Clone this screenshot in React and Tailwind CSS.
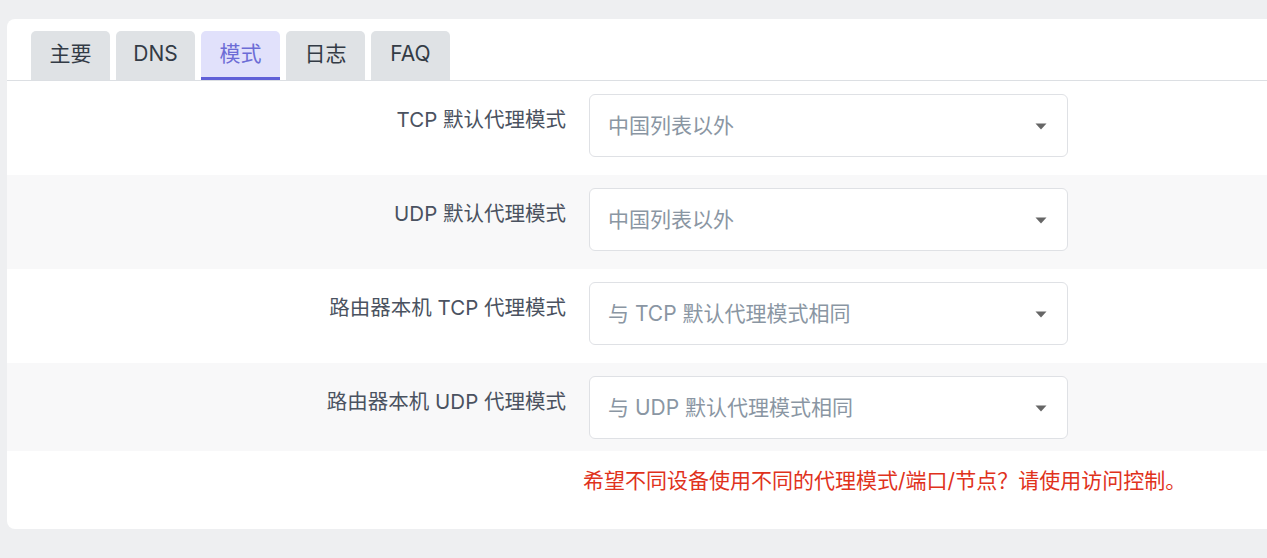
const TABS = ["主要", "DNS", "模式", "日志", "FAQ"];

const ROWS = [
  { label: "TCP 默认代理模式", value: "中国列表以外" },
  { label: "UDP 默认代理模式", value: "中国列表以外" },
  { label: "路由器本机 TCP 代理模式", value: "与 TCP 默认代理模式相同" },
  { label: "路由器本机 UDP 代理模式", value: "与 UDP 默认代理模式相同" },
];

const font = { fontFamily: "Inter, 'Noto Sans CJK SC', sans-serif" };

function Select({ value }) {
  return (
    <div className="w-[479px] h-[63px] bg-white border border-[#dfe1e5] rounded-[6px] flex items-center justify-between pl-[18px] pr-[20px]">
      <span className="text-[21px] text-[#8a96a3]">{value}</span>
      <svg width="12" height="7" viewBox="0 0 12 7" className="mt-[1px]">
        <path d="M0.5 0.5 H11.5 L6 6.5 Z" fill="#666" />
      </svg>
    </div>
  );
}

export default function App() {
  return (
    <div className="w-[1267px] h-[558px] bg-[#eeeff1] pt-[19px] pl-[7px] overflow-hidden" style={font}>
      <div className="bg-white rounded-l-[8px] h-[510px] pt-[12px]">
        {/* tab bar */}
        <div className="flex gap-[6px] pl-[24px] border-b border-[#dcdfe3]">
          {TABS.map((t) => {
            const active = t === "模式";
            return (
              <div
                key={t}
                className={
                  active
                    ? "w-[79px] h-[49px] rounded-t-[5px] bg-[#e1e1fb] text-[#6c6cd6] border-b-[3px] border-[#6060d8] flex items-center justify-center text-[21px]"
                    : "w-[79px] h-[49px] rounded-t-[5px] bg-[#dfe2e5] text-[#333b45] flex items-center justify-center text-[21px] pb-[3px]"
                }
              >
                {t}
              </div>
            );
          })}
        </div>

        {/* option rows */}
        {ROWS.map((r, i) => (
          <div
            key={r.label}
            className={`flex pt-[13px] ${i % 2 ? "bg-[#f8f8f9]" : "bg-white"} ${i === 3 ? "h-[88px]" : "h-[94px]"}`}
          >
            <div className="w-[559px] text-right text-[20.5px] text-[#4a5260] pt-[11px]">{r.label}</div>
            <div className="ml-[23px]">
              <Select value={r.value} />
            </div>
          </div>
        ))}

        <div className="pl-[576px] pt-[14px] text-[21px] text-[#e0321c]">
          希望不同设备使用不同的代理模式/端口/节点？请使用访问控制。
        </div>
      </div>
    </div>
  );
}
